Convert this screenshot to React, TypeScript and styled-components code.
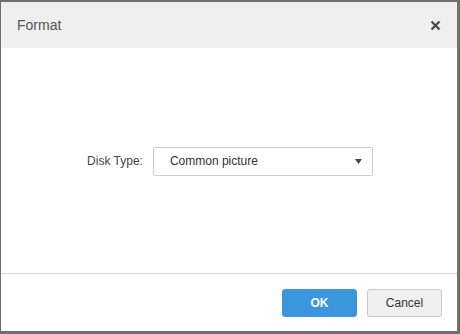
import React from 'react';
import styled, { createGlobalStyle } from 'styled-components';

const GlobalStyle = createGlobalStyle`
	html, body {
		margin: 0;
		padding: 0;
		background: #707070;
		font-family: Arial, 'Liberation Sans', sans-serif;
	}
`;

const Backdrop = styled.div`
	width: 460px;
	height: 334px;
	box-sizing: border-box;
	padding: 2px 3px 3px 1px;
	background: #6f6f6f;
`;

const Dialog = styled.div`
	display: flex;
	flex-direction: column;
	height: 100%;
	background: #fff;
`;

const Header = styled.div`
	display: flex;
	align-items: center;
	justify-content: space-between;
	height: 46px;
	padding: 0 16px 0 16px;
	background: #efefef;
	color: #555;
	font-size: 14px;
`;

const Close = styled.span`
	display: flex;
	color: #444;
	cursor: pointer;
`;

const Body = styled.div`
	flex: 1;
	display: flex;
	align-items: center;
	justify-content: center;
	gap: 10px;
	padding: 1px 0 0 2px;
	border-bottom: 1px solid #d6d6d6;
	font-size: 12px;
	color: #333;
`;

const Label = styled.label`
	color: #444;
`;

const Select = styled.div`
	display: flex;
	align-items: center;
	justify-content: space-between;
	box-sizing: border-box;
	width: 220px;
	height: 29px;
	padding: 0 10px 0 16px;
	border: 1px solid #ccc;
	border-radius: 2px;
	color: #333;
`;

const Footer = styled.div`
	display: flex;
	justify-content: flex-end;
	align-items: center;
	gap: 10px;
	height: 57px;
	padding-right: 15px;
`;

const Button = styled.button<{ $primary?: boolean }>`
	width: 75px;
	height: 28px;
	border-radius: 3px;
	font-family: inherit;
	font-size: 12px;
	cursor: pointer;
	border: 1px solid ${p => (p.$primary ? '#3a97dd' : '#c9c9c9')};
	background: ${p => (p.$primary ? '#3a97dd' : '#f0f0f0')};
	color: ${p => (p.$primary ? '#fff' : '#333')};
	font-weight: ${p => (p.$primary ? 'bold' : 'normal')};
`;

export default function App() {
	return (
		<>
			<GlobalStyle />
			<Backdrop>
				<Dialog>
					<Header>
						<span>Format</span>
						<Close>
							<svg width="11" height="11" viewBox="0 0 11 11">
								<path d="M1.5 1.5L9.5 9.5M9.5 1.5L1.5 9.5" stroke="#444" strokeWidth="2.2" />
							</svg>
						</Close>
					</Header>
					<Body>
						<Label>Disk Type:</Label>
						<Select>
							<span>Common picture</span>
							<svg width="7" height="5" viewBox="0 0 7 5">
								<path d="M0 0H7L3.5 5Z" fill="#444" />
							</svg>
						</Select>
					</Body>
					<Footer>
						<Button $primary>OK</Button>
						<Button>Cancel</Button>
					</Footer>
				</Dialog>
			</Backdrop>
		</>
	);
}
